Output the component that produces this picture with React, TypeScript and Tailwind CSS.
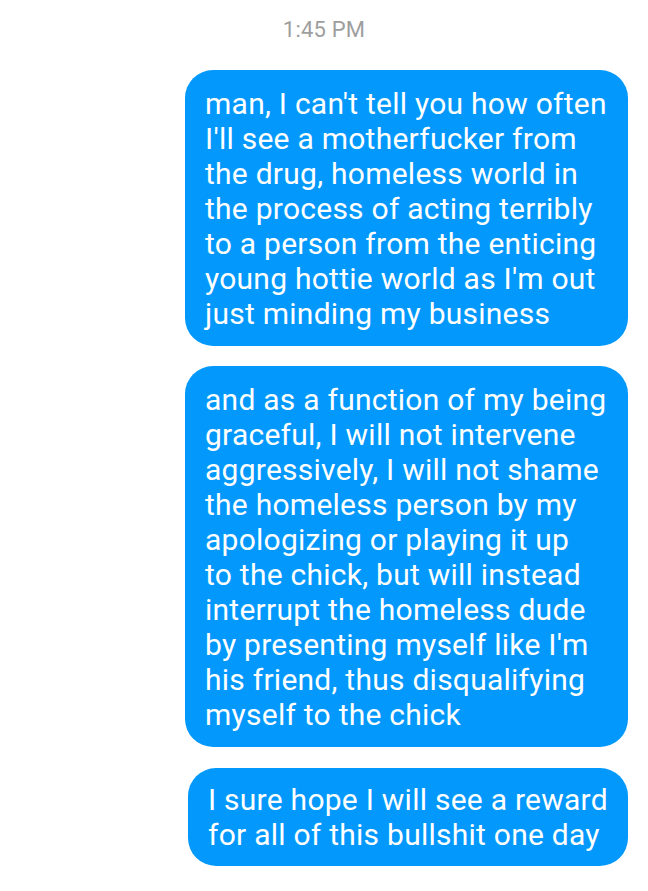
import React from "react";

const b1 = [
  "man, I can't tell you how often",
  "I'll see a motherfucker from",
  "the drug, homeless world in",
  "the process of acting terribly",
  "to a person from the enticing",
  "young hottie world as I'm out",
  "just minding my business",
];
const b2 = [
  "and as a function of my being",
  "graceful, I will not intervene",
  "aggressively, I will not shame",
  "the homeless person by my",
  "apologizing or playing it up",
  "to the chick, but will instead",
  "interrupt the homeless dude",
  "by presenting myself like I'm",
  "his friend, thus disqualifying",
  "myself to the chick",
];
const b3 = ["I sure hope I will see a reward", "for all of this bullshit one day"];

function Lines({ lines }: { lines: string[] }) {
  return (
    <>
      {lines.map((l, i) => (
        <div key={i} className="whitespace-nowrap">
          {l}
        </div>
      ))}
    </>
  );
}

export default function App() {
  return (
    <div
      className="w-[648px] h-[891px] bg-white overflow-hidden"
      style={{ fontFamily: "Roboto, 'Noto Sans', sans-serif" }}
    >
      <div className="pt-[17px] text-center text-[22px] leading-[25px] tracking-[0.2px] text-[#9e9e9e]">1:45 PM</div>
      <div className="flex flex-col items-end pr-[20px] pt-[28px] gap-[20px] text-white text-[30px] leading-[35px] tracking-[0.25px]">
        <div className="w-[443px] bg-[#0399fc] rounded-[28px] pl-[20px] pt-[16px] pb-[15px]">
          <Lines lines={b1} />
        </div>
        <div className="w-[443px] bg-[#0399fc] rounded-[28px] pl-[20px] pt-[16px] pb-[15px]">
          <Lines lines={b2} />
        </div>
        <div className="w-[440px] bg-[#0399fc] rounded-[28px] pl-[20px] pt-[14px] pb-[14px] mt-[1px]">
          <Lines lines={b3} />
        </div>
      </div>
    </div>
  );
}
